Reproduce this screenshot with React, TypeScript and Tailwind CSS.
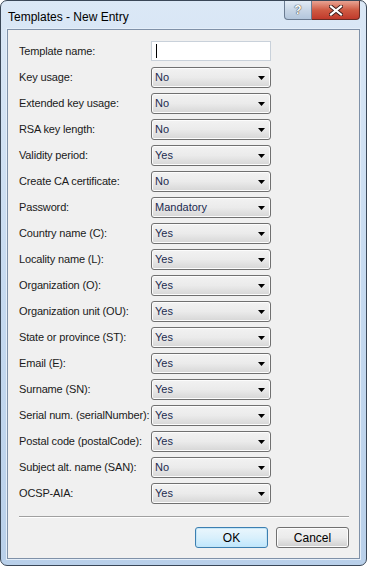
import React from 'react';

const rows: { label: string; value: string }[] = [
  { label: 'Key usage:', value: 'No' },
  { label: 'Extended key usage:', value: 'No' },
  { label: 'RSA key length:', value: 'No' },
  { label: 'Validity period:', value: 'Yes' },
  { label: 'Create CA certificate:', value: 'No' },
  { label: 'Password:', value: 'Mandatory' },
  { label: 'Country name (C):', value: 'Yes' },
  { label: 'Locality name (L):', value: 'Yes' },
  { label: 'Organization (O):', value: 'Yes' },
  { label: 'Organization unit (OU):', value: 'Yes' },
  { label: 'State or province (ST):', value: 'Yes' },
  { label: 'Email (E):', value: 'Yes' },
  { label: 'Surname (SN):', value: 'Yes' },
  { label: 'Serial num. (serialNumber):', value: 'Yes' },
  { label: 'Postal code (postalCode):', value: 'Yes' },
  { label: 'Subject alt. name (SAN):', value: 'No' },
  { label: 'OCSP-AIA:', value: 'Yes' },
];

function Combo({ value }: { value: string }) {
  return (
    <div className="flex h-[21px] w-[120px] shrink-0 items-center justify-between rounded-[3px] border border-[#707070] bg-gradient-to-b from-[#f2f2f2] via-[#ebebeb] to-[#d6d6d6] pl-[3px] pr-[5px] shadow-[inset_0_0_0_1px_#fcfcfc]">
      <span className="text-[11px] leading-none text-[#1c2a4f]">{value}</span>
      <svg width="7" height="4" viewBox="0 0 7 4">
        <path d="M0 0h7L3.5 4z" fill="#000" />
      </svg>
    </div>
  );
}

export default function App() {
  return (
    <div
      className="relative flex h-[566px] w-[367px] flex-col overflow-hidden rounded-[7px] border border-[#3a4757] bg-gradient-to-b from-[#dbe8f6] via-[#c6daf0] to-[#b9d0ea]"
      style={{ fontFamily: '"Liberation Sans", Arial, sans-serif' }}
    >
      {/* title bar */}
      <div className="flex h-[28px] shrink-0 items-start justify-between">
        <div className="pl-[7px] pt-[7px] text-[12px] text-black">Templates - New Entry</div>
        <div className="mr-[6px] flex">
          <div className="flex h-[19px] w-[28px] items-center justify-center rounded-bl-[4px] border border-t-0 border-[#6a7b91] bg-gradient-to-b from-[#e2ebf5] via-[#c8d6e6] to-[#b3c6dc]">
            <span className="text-[12px] font-bold leading-none text-white [text-shadow:0_0_1px_#333,0_0_1px_#333]">?</span>
          </div>
          <div className="flex h-[19px] w-[48px] items-center justify-center rounded-br-[4px] border border-l-0 border-t-0 border-[#6b2b24] bg-gradient-to-b from-[#e8a393] via-[#cf5a43] to-[#c0392b]">
            <svg width="14" height="11" viewBox="0 0 14 11">
              <path d="M2 1.5l10 8M12 1.5l-10 8" stroke="#3b1c1a" strokeWidth="4" strokeLinecap="square" />
              <path d="M2 1.5l10 8M12 1.5l-10 8" stroke="#fff" strokeWidth="2.2" strokeLinecap="square" />
            </svg>
          </div>
        </div>
      </div>

      {/* client area */}
      <div className="mx-[6px] flex h-[530px] flex-col border border-[#7f91a8] bg-[#f0f0f0] shadow-[0_0_0_1px_#e4eef9]">
        <div className="flex flex-col gap-[5px] pl-[11px] pt-[11px]">
          <div className="mb-[1px] flex items-center">
            <div className="w-[132px] shrink-0 whitespace-nowrap text-[11px] tracking-[-0.15px] text-[#1a1a1a]">Template name:</div>
            <div className="flex h-[20px] w-[120px] items-center border border-[#c9d1da] bg-white pl-[4px]">
              <div className="h-[14px] w-px bg-black" />
            </div>
          </div>
          {rows.map((r) => (
            <div key={r.label} className="flex items-center">
              <div className="w-[132px] shrink-0 whitespace-nowrap text-[11px] tracking-[-0.15px] text-[#1a1a1a]">{r.label}</div>
              <Combo value={r.value} />
            </div>
          ))}
        </div>

        <div className="ml-[11px] mr-[10px] mt-[12px] h-[2px] border-t border-b border-t-[#a0a0a0] border-b-white" />

        <div className="mr-[10px] mt-[9px] flex justify-end gap-[8px]">
          <button className="flex h-[21px] w-[73px] items-center justify-center rounded-[3px] border border-[#3c7fb1] bg-gradient-to-b from-[#eaf6fd] via-[#d9f0fc] to-[#bee6fd] text-[12px] text-black shadow-[inset_0_0_0_1px_#c4e5f6]">
            OK
          </button>
          <button className="flex h-[21px] w-[73px] items-center justify-center rounded-[3px] border border-[#707070] bg-gradient-to-b from-[#f2f2f2] via-[#ebebeb] to-[#cfcfcf] text-[12px] text-black shadow-[inset_0_0_0_1px_#fcfcfc]">
            Cancel
          </button>
        </div>
      </div>
    </div>
  );
}
